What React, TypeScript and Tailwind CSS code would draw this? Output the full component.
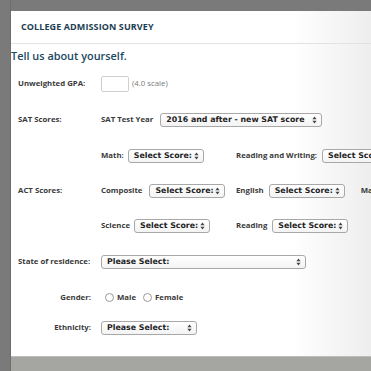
import React from "react";

const Arrows = () => (
  <svg width="5" height="8" viewBox="0 0 5 8" className="shrink-0">
    <path d="M2.5 0.5 L4.6 3.2 L0.4 3.2 Z" fill="#444" />
    <path d="M2.5 7.5 L4.6 4.8 L0.4 4.8 Z" fill="#444" />
  </svg>
);

function Select({ text, w }: { text: string; w: string }) {
  return (
    <div
      className={`${w} h-[14px] shrink-0 flex items-center justify-between pl-[5px] pr-[4px] border border-[#a8a8a8] rounded-[3px] bg-[linear-gradient(#ffffff,#f3f3f3)] overflow-hidden`}
    >
      <span className="font-['DejaVu_Sans',sans-serif] font-bold text-[7.85px] leading-none text-[#222] whitespace-nowrap">
        {text}
      </span>
      <Arrows />
    </div>
  );
}

const lab = "font-['Open_Sans',sans-serif] font-bold text-[7.8px] text-[#3a3a3a] whitespace-nowrap leading-none";

export default function App() {
  return (
    <div className="w-[371px] h-[371px] overflow-hidden bg-[#7a7a7a] flex">
      <div className="w-[11px] shrink-0 border-r border-[#6e6e6e]" />
      <div className="flex-1 flex flex-col min-w-0">
        <div className="h-[11px] shrink-0" />
        <div className="h-[345px] shrink-0 bg-[linear-gradient(to_right,#ffffff_0%,#ffffff_78%,#eeeeee_100%)] flex flex-col">
          <div className="h-[33px] shrink-0 flex items-center pl-[10px] border-b border-[#e2e2e2]">
            <span className="font-['Open_Sans',sans-serif] font-bold text-[9px] text-[#1d3d53] tracking-[0.1px] whitespace-nowrap">
              COLLEGE ADMISSION SURVEY
            </span>
          </div>
          <div className="h-[22px] shrink-0 flex items-center pt-[3px]">
            <span className="font-['Open_Sans',sans-serif] font-semibold text-[10.9px] text-[#1b4862] whitespace-nowrap">
              Tell us about yourself.
            </span>
          </div>
          <div className="flex flex-col pl-[7px]">
            {/* GPA */}
            <div className="h-[36px] flex items-center">
              <div className={`w-[83px] shrink-0 ${lab}`}>Unweighted GPA:</div>
              <div className="w-[28px] h-[16px] border border-[#cfcfcf] rounded-[2px] bg-white shrink-0" />
              <span className="ml-[3px] font-['Open_Sans',sans-serif] text-[7.8px] text-[#7a7a7a] whitespace-nowrap">
                (4.0 scale)
              </span>
            </div>
            {/* SAT */}
            <div className="h-[36px] flex items-center">
              <div className={`w-[83px] shrink-0 ${lab}`}>SAT Scores:</div>
              <span className={`${lab} mr-[7px]`}>SAT Test Year</span>
              <Select text="2016 and after - new SAT score" w="w-[162px]" />
            </div>
            {/* Math */}
            <div className="h-[35px] flex items-center">
              <div className="w-[83px] shrink-0" />
              <div className="w-[135px] shrink-0 flex items-center">
                <span className={`${lab} mr-[4px]`}>Math:</span>
                <Select text="Select Score:" w="w-[76px]" />
              </div>
              <span className={`${lab} mr-[5px]`}>Reading and Writing:</span>
              <Select text="Select Score:" w="w-[76px]" />
            </div>
            {/* ACT */}
            <div className="h-[35px] flex items-center">
              <div className={`w-[83px] shrink-0 ${lab}`}>ACT Scores:</div>
              <div className="w-[135px] shrink-0 flex items-center">
                <span className={`${lab} mr-[7px]`}>Composite</span>
                <Select text="Select Score:" w="w-[76px]" />
              </div>
              <span className={`${lab} mr-[5px]`}>English</span>
              <Select text="Select Score:" w="w-[76px]" />
              <span className={`${lab} ml-[16px]`}>Math</span>
            </div>
            {/* Science */}
            <div className="h-[36px] flex items-center">
              <div className="w-[83px] shrink-0" />
              <div className="w-[135px] shrink-0 flex items-center">
                <span className={`${lab} mr-[4px]`}>Science</span>
                <Select text="Select Score:" w="w-[76px]" />
              </div>
              <span className={`${lab} mr-[5px]`}>Reading</span>
              <Select text="Select Score:" w="w-[76px]" />
            </div>
            {/* State */}
            <div className="h-[36px] flex items-center">
              <div className={`w-[83px] shrink-0 ${lab}`}>State of residence:</div>
              <Select text="Please Select:" w="w-[205px]" />
            </div>
            {/* Gender */}
            <div className="h-[35px] flex items-center">
              <div className={`w-[83px] shrink-0 pr-[10px] text-right ${lab}`}>Gender:</div>
              <div className="ml-[4px] w-[9px] h-[9px] rounded-full border border-[#9a9a9a] bg-white shrink-0" />
              <span className={`${lab} ml-[3px]`}>Male</span>
              <div className="ml-[7px] w-[9px] h-[9px] rounded-full border border-[#9a9a9a] bg-white shrink-0" />
              <span className={`${lab} ml-[3px]`}>Female</span>
            </div>
            {/* Ethnicity */}
            <div className="h-[26px] flex items-center">
              <div className={`w-[83px] shrink-0 pr-[10px] text-right ${lab}`}>Ethnicity:</div>
              <Select text="Please Select:" w="w-[96px]" />
            </div>
          </div>
        </div>
        <div className="flex-1 bg-[#a5a5a1] border-t border-[#bdbdb9]" />
      </div>
    </div>
  );
}
